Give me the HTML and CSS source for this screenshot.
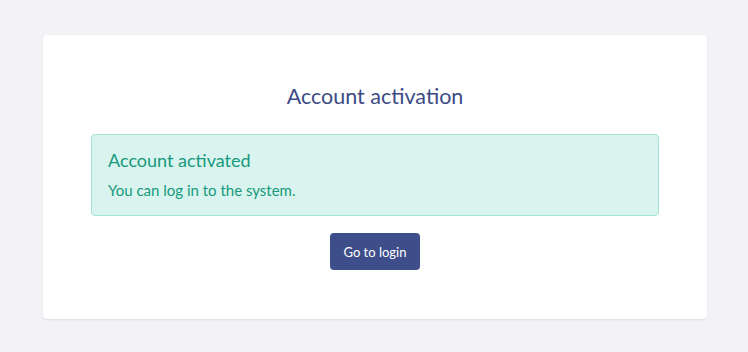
FILE: index.html
```html
<!DOCTYPE html>
<html lang="en">

<head>
      <meta charset="UTF-8">
      <meta name="viewport" content="width=device-width, initial-scale=1.0">
      <title>Account activation</title>
      <link rel="stylesheet" href="styles.css">
</head>

<body>
      <div class="page">
            <div class="card">
                  <h1 class="title">Account activation</h1>

                  <div class="alert">
                        <h2 class="alertHeading">Account activated</h2>
                        <p class="alertText">You can log in to the system.</p>
                  </div>

                  <div class="actions">
                        <button class="btn" type="button">Go to login</button>
                  </div>
            </div>
      </div>
</body>

</html>
```

FILE: styles.css
```css
/* page */
body {
      margin: 0;
      background-color: #f2f2f7;
      font-family: Lato, "Noto Sans", sans-serif;
}

.page {
      padding: 35px 41px 33px 43px;
}

/* white card */
.card {
      background-color: #fff;
      border-radius: 4px;
      box-shadow: 0 1px 2px rgba(0, 0, 0, 0.08);
      padding: 48px 48px 49px;
}

.title {
      margin: 0 0 25px;
      text-align: center;
      font-size: 21.5px;
      font-weight: 400;
      line-height: 26px;
      color: #3c4b84;
}

/* success alert */
.alert {
      background-color: #d9f4ee;
      border: 1px solid #a3e4d5;
      border-radius: 4px;
      padding: 14px 16px;
      color: #16997d;
}

.alertHeading {
      margin: 0 0 8px;
      font-size: 18px;
      font-weight: 400;
      line-height: 22px;
}

.alertText {
      margin: 0;
      font-size: 15px;
      line-height: 22px;
}

/* button */
.actions {
      margin-top: 17px;
      text-align: center;
}

.btn {
      height: 37px;
      width: 90px;
      border: none;
      border-radius: 4px;
      background-color: #3e4e8a;
      color: #fff;
      font-family: inherit;
      font-size: 13px;
}
```
